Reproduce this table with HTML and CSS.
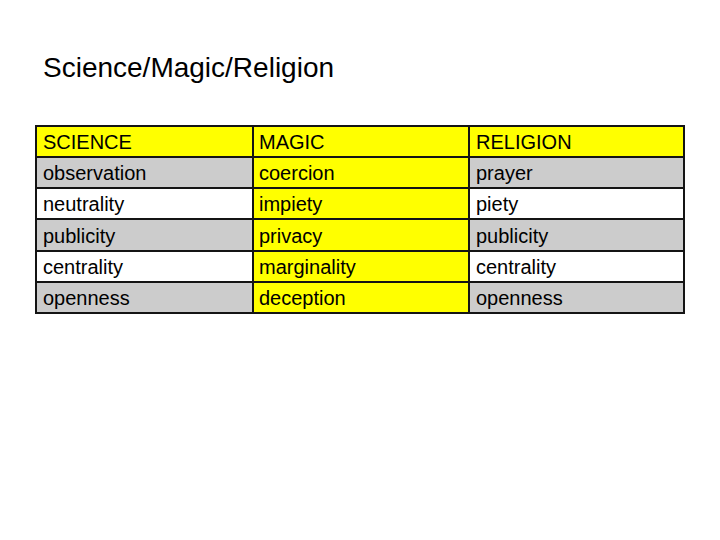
FILE: index.html
```html
<!DOCTYPE html>
<html>
<head>
<meta charset="utf-8">
<link rel="stylesheet" href="styles.css">
</head>
<body>
<div class="slide">
  <h1 class="title">Science/Magic/Religion</h1>
  <div class="grid">
    <div class="cell yellow">SCIENCE</div>
    <div class="cell yellow">MAGIC</div>
    <div class="cell yellow">RELIGION</div>

    <div class="cell gray">observation</div>
    <div class="cell yellow">coercion</div>
    <div class="cell gray">prayer</div>

    <div class="cell white">neutrality</div>
    <div class="cell yellow">impiety</div>
    <div class="cell white">piety</div>

    <div class="cell gray">publicity</div>
    <div class="cell yellow">privacy</div>
    <div class="cell gray">publicity</div>

    <div class="cell white">centrality</div>
    <div class="cell yellow">marginality</div>
    <div class="cell white">centrality</div>

    <div class="cell gray">openness</div>
    <div class="cell yellow">deception</div>
    <div class="cell gray">openness</div>
  </div>
</div>
</body>
</html>
```

FILE: styles.css
```css
html, body {
  margin: 0;
  padding: 0;
  background: #ffffff;
}
.slide {
  width: 720px;
  height: 540px;
  padding: 52px 0 0 35px;
  box-sizing: border-box;
  font-family: "Liberation Sans", Arial, sans-serif;
  color: #000000;
}
.title {
  margin: 0 0 41px 8px;
  font-size: 28px;
  font-weight: normal;
  line-height: 32px;
}
.grid {
  width: 650px;
  height: 189px;
  box-sizing: border-box;
  padding: 2px;
  background: #141414;
  display: grid;
  grid-template-columns: 215px 214px 213px;
  grid-template-rows: repeat(6, 1fr);
  gap: 2px;
}
.cell {
  display: flex;
  align-items: center;
  padding: 2px 0 0 6px;
  font-size: 20px;
}
.cell:nth-child(3n+2) {
  padding-left: 5px;
}
.yellow { background: #ffff00; }
.gray { background: #cccccc; }
.white { background: #ffffff; }
```
